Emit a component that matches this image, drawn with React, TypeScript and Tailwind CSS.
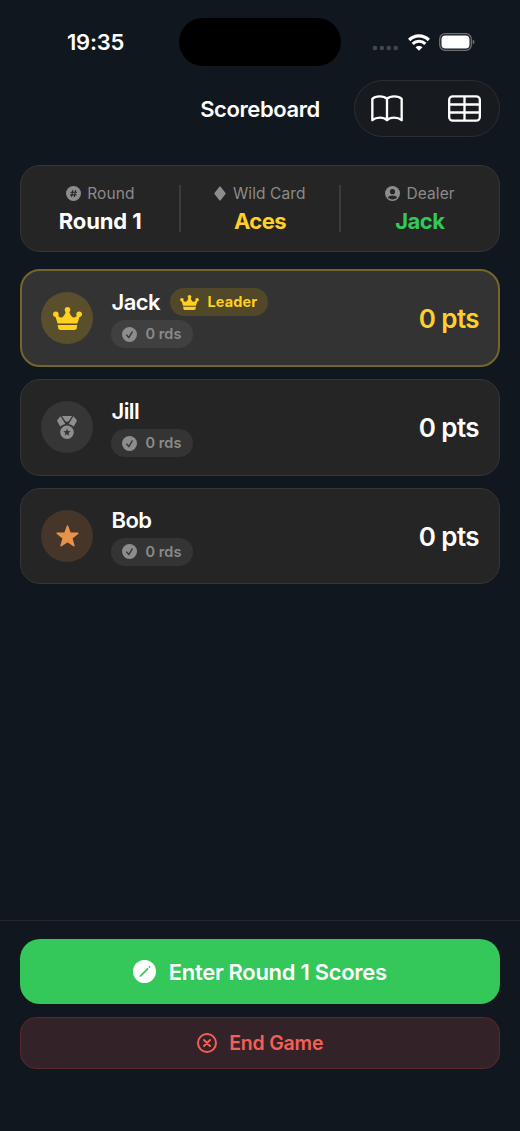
import React from "react";

type Tone = "gold" | "silver" | "bronze";

interface Player {
  name: string;
  points: number;
  rounds: number;
  tone: Tone;
  leader?: boolean;
}

const PLAYERS: Player[] = [
  { name: "Jack", points: 0, rounds: 0, tone: "gold", leader: true },
  { name: "Jill", points: 0, rounds: 0, tone: "silver" },
  { name: "Bob", points: 0, rounds: 0, tone: "bronze" },
];

const AVATAR: Record<Tone, string> = {
  gold: "bg-[#5a4f2c] text-[#ffd01f]",
  silver: "bg-[#363636] text-[#8f8f8f]",
  bronze: "bg-[#46362a] text-[#e8924a]",
};

function Crown({ className }: { className: string }) {
  return (
    <svg viewBox="0 0 88 70" className={className} fill="currentColor" aria-hidden>
      <circle cx="8.5" cy="22" r="8.5" />
      <circle cx="44" cy="8.5" r="8.5" />
      <circle cx="79.5" cy="22" r="8.5" />
      <path d="M6 26L13 24C20 31 25 33 28 31C33 28 37 22 39 13H49C51 22 55 28 60 31C63 33 68 31 75 24L82 26L74 50H14Z" />
      <path d="M14 55H74L72 65Q70.500 70 66 70H22Q17.500 70 16 65Z" />
    </svg>
  );
}

function Medal({ className }: { className: string }) {
  return (
    <svg viewBox="0 0 58 68" className={className} fill="currentColor" aria-hidden>
      <path d="M10 1L24 24Q15 26 9 31L1 17Q-1 14 1 11Z" />
      <path d="M48 1L34 24Q43 26 49 31L57 17Q59 14 57 11Z" />
      <path d="M14 0H44L35 14Q33 17 29 17Q25 17 23 14Z" />
      <path
        fillRule="evenodd"
        d="M29 28a20 20 0 1 1 0 40a20 20 0 1 1 0-40ZM29 37l-3 7.500-8 .6 6.200 5.200-2 7.900L29 54l6.800 4.200-2-7.900 6.200-5.200-8-.6Z"
      />
    </svg>
  );
}

function Star({ className }: { className: string }) {
  return (
    <svg viewBox="0 0 68 66" className={className} fill="currentColor" stroke="currentColor" strokeWidth="5" strokeLinejoin="round" aria-hidden>
      <path d="M34 3.500L41.500 24.500L64.500 25L46.500 39.500L53 62L34 49L15 62L21.500 39.500L3.500 25L26.500 24.500Z" />
    </svg>
  );
}

function CheckSeal() {
  return (
    <svg viewBox="0 0 44 44" className="size-[15px]" aria-hidden>
      <circle cx="22" cy="22" r="22" fill="#8d8d8d" />
      <path d="M14 24L20 31L30 14.500" fill="none" stroke="#3c3c3c" strokeWidth="4.500" strokeLinecap="round" strokeLinejoin="round" />
    </svg>
  );
}

function StatusBar() {
  return (
    <div className="flex h-[66px] items-start justify-between pt-[18px]">
      <div className="w-[179px] pt-[8px] pl-[67px] text-[22px] leading-[32px] font-semibold tracking-[-0.2px]">19:35</div>
      <div className="h-[48px] w-[162px] rounded-full bg-black" />
      <div className="flex h-[48px] w-[179px] items-center pl-[31px]">
        <svg viewBox="0 0 26 6" className="mt-[12px] h-[6px] w-[26px]" fill="#42474d" aria-hidden>
          <circle cx="3" cy="3" r="2.300" />
          <circle cx="9.900" cy="3" r="2.300" />
          <circle cx="16.800" cy="3" r="2.300" />
          <circle cx="23.700" cy="3" r="2.300" />
        </svg>
        <svg viewBox="0 0 66 50" className="ml-[10px] h-[17px] w-[22px]" fill="none" stroke="#fff" aria-hidden>
          <path d="M3.500 17.500C20 1 46 1 62.500 17.500" strokeWidth="10" />
          <path d="M14 29C25 18.500 41 18.500 52 29" strokeWidth="9.500" />
          <path d="M33 50L22.500 39.500C28 34 38 34 43.500 39.500Z" fill="#fff" stroke="none" />
        </svg>
        <svg viewBox="0 0 36 18" className="ml-[9px] h-[18px] w-[36px]" aria-hidden>
          <rect x=".7" y=".7" width="31.600" height="16.600" rx="5.500" fill="none" stroke="#6d7175" strokeWidth="1.300" />
          <rect x="2.500" y="2.500" width="28" height="13" rx="3.800" fill="#fff" />
          <path d="M33.700 6.500Q35.500 7.200 35.500 9T33.700 11.500Z" fill="#6d7175" />
        </svg>
      </div>
    </div>
  );
}

function Header() {
  return (
    <header className="mt-[14px] grid h-[57px] grid-cols-[1fr_120px_1fr] items-center">
      <span />
      <h1 className="text-center text-[22px] leading-[28px] font-semibold tracking-[-0.400px] whitespace-nowrap">Scoreboard</h1>
      <div className="mr-[20px] flex h-[57px] w-[146px] items-center justify-between justify-self-end rounded-full border border-[#2b2f34] bg-[#171a1e] pr-[18px] pl-[16px]">
        <button type="button" aria-label="Rules">
          <svg viewBox="0 0 96 80" className="h-[27px] w-[32px]" fill="none" stroke="#fff" strokeWidth="7" strokeLinejoin="round" aria-hidden>
            <path d="M48 11C38 1 14 1 4 11V75C16 65 38 65 48 75C58 65 80 65 92 75V11C82 1 58 1 48 11ZM48 11V75" />
          </svg>
        </button>
        <button type="button" aria-label="Score table">
          <svg viewBox="0 0 99 80" className="h-[27px] w-[33px]" fill="none" stroke="#fff" strokeWidth="7" aria-hidden>
            <rect x="3.500" y="3.500" width="92" height="73" rx="11" />
            <path d="M3 28H96M3 52H96M49.500 3V77" />
          </svg>
        </button>
      </div>
    </header>
  );
}

function Stat({ icon, label, value, color }: { icon: React.ReactNode; label: string; value: string; color: string }) {
  return (
    <div className="flex flex-1 flex-col items-center">
      <div className="flex items-center gap-[6.500px] text-[15.500px] leading-[20px] tracking-[0.1px] text-[#8b8b8b]">
        {icon}
        <span className="pt-px">{label}</span>
      </div>
      <div className={`mt-[3px] text-[22px] leading-[28px] font-bold ${color}`}>{value}</div>
    </div>
  );
}

function Summary() {
  return (
    <section className="mx-[20px] mt-[28px] flex h-[87px] items-center rounded-[20px] border border-[#34373a] bg-[#252525]">
      <Stat
        label="Round"
        value="Round 1"
        color="text-white tracking-[-0.100px]"
        icon={
          <svg viewBox="0 0 44 44" className="size-[15px]" aria-hidden>
            <circle cx="22" cy="22" r="22" fill="#8d8d8d" />
            <path d="M20 13L16.500 31M28 13L24.500 31M14 18.500H31M13 26H30" stroke="#252525" strokeWidth="3.200" strokeLinecap="round" />
          </svg>
        }
      />
      <div className="h-[47px] w-[1.500px] bg-[#3b3b3b]" />
      <Stat
        label="Wild Card"
        value="Aces"
        color="text-[#ffcf2a] tracking-[-0.600px]"
        icon={
          <svg viewBox="0 0 36 44" className="h-[15px] w-[12px]" fill="#8d8d8d" aria-hidden>
            <path d="M16 1.500Q18 -1 20 1.500L34 19.500Q36 22 34 24.500L20 42.500Q18 45 16 42.500L2 24.500Q0 22 2 19.500Z" />
          </svg>
        }
      />
      <div className="h-[47px] w-[1.500px] bg-[#3b3b3b]" />
      <Stat
        label="Dealer"
        value="Jack"
        color="text-[#34c759] tracking-[-0.500px]"
        icon={
          <svg viewBox="0 0 44 44" className="size-[15px]" aria-hidden>
            <circle cx="22" cy="22" r="22" fill="#8d8d8d" />
            <circle cx="22" cy="16.500" r="7.500" fill="#252525" />
            <path d="M8 34C12 25.500 32 25.500 36 34C29 41 15 41 8 34Z" fill="#252525" />
          </svg>
        }
      />
    </section>
  );
}

function PlayerRow({ player }: { player: Player }) {
  const { name, points, rounds, tone, leader } = player;
  const frame = leader
    ? "h-[98px] border-2 border-[#75652b] bg-[#333333] px-[19px]"
    : "h-[96.500px] border border-[#34373a] bg-[#252525] px-[20px]";

  return (
    <li className={`flex items-center rounded-[20px] ${frame}`}>
      <div className={`grid size-[52px] shrink-0 place-items-center rounded-full ${AVATAR[tone]}`}>
        {tone === "gold" && <Crown className="h-[23px] w-[29px]" />}
        {tone === "silver" && <Medal className="h-[23px] w-[20px]" />}
        {tone === "bronze" && <Star className="h-[22px] w-[23px]" />}
      </div>
      <div className="ml-[18px] flex flex-1 flex-col items-start">
        <div className="flex h-[28px] items-center gap-[10px] pl-[0.500px]">
          <span className="text-[22px] leading-[28px] font-semibold tracking-[-0.600px]">{name}</span>
          {leader && (
            <span className="flex h-[28px] w-[98px] items-center justify-center gap-[8px] rounded-full bg-[#504829] text-[14.500px] font-bold tracking-[0.1px] text-[#ffd01f]">
              <Crown className="h-[15px] w-[19px]" />
              Leader
            </span>
          )}
        </div>
        <span
          className={`mt-[4px] flex h-[28px] w-[82px] items-center justify-center gap-[8px] rounded-full text-[14.500px] font-semibold tracking-[0.1px] text-[#8b8b8b] ${
            leader ? "bg-[#404040]" : "bg-[#343434]"
          }`}
        >
          <CheckSeal />
          {rounds} rds
        </span>
      </div>
      <div className={`pt-[2px] text-[26px] leading-[32px] font-semibold tracking-[-0.600px] ${leader ? "text-[#ffcf2a]" : "text-white"}`}>
        {points} pts
      </div>
    </li>
  );
}

function Actions() {
  return (
    <footer className="mt-auto flex h-[211px] flex-col gap-[13px] border-t border-[#23272d] px-[20px] pt-[18px]">
      <button
        type="button"
        className="flex h-[65px] w-full items-center justify-center gap-[12.500px] rounded-[20px] bg-[#34c759] text-[22px] font-semibold tracking-[-0.3px] text-white"
      >
        <svg viewBox="0 0 68 68" className="size-[23px]" aria-hidden>
          <circle cx="34" cy="34" r="34" fill="#fff" />
          <path d="M21 45L43 23L46.500 26.500L24.500 48.500L18.500 50Z" fill="#34c759" />
          <path d="M45.500 20.500L47.500 18.500Q49 17.500 50.500 19L51 19.500Q52 21 51 22.500L49 24.500Z" fill="#34c759" />
        </svg>
        <span className="pt-px">Enter Round 1 Scores</span>
      </button>
      <button
        type="button"
        className="flex h-[52px] w-full items-center justify-center gap-[12.500px] rounded-[16px] border border-[#57292f] bg-[#332227] text-[19.500px] font-semibold tracking-[-0.200px] text-[#f45f57]"
      >
        <svg viewBox="0 0 60 60" className="size-[20px]" fill="none" stroke="currentColor" strokeWidth="6" strokeLinecap="round" aria-hidden>
          <circle cx="30" cy="30" r="27" />
          <path d="M21 21L39 39M39 21L21 39" />
        </svg>
        <span className="pt-px">End Game</span>
      </button>
    </footer>
  );
}

export default function App() {
  return (
    <div className="flex h-[1131px] w-[520px] flex-col overflow-hidden bg-[#11171e] font-[Inter,sans-serif] text-white">
      <StatusBar />
      <Header />
      <Summary />
      <ul className="mx-[20px] mt-[17px] flex flex-col gap-[12px]">
        {PLAYERS.map((p) => (
          <PlayerRow key={p.name} player={p} />
        ))}
      </ul>
      <Actions />
    </div>
  );
}
